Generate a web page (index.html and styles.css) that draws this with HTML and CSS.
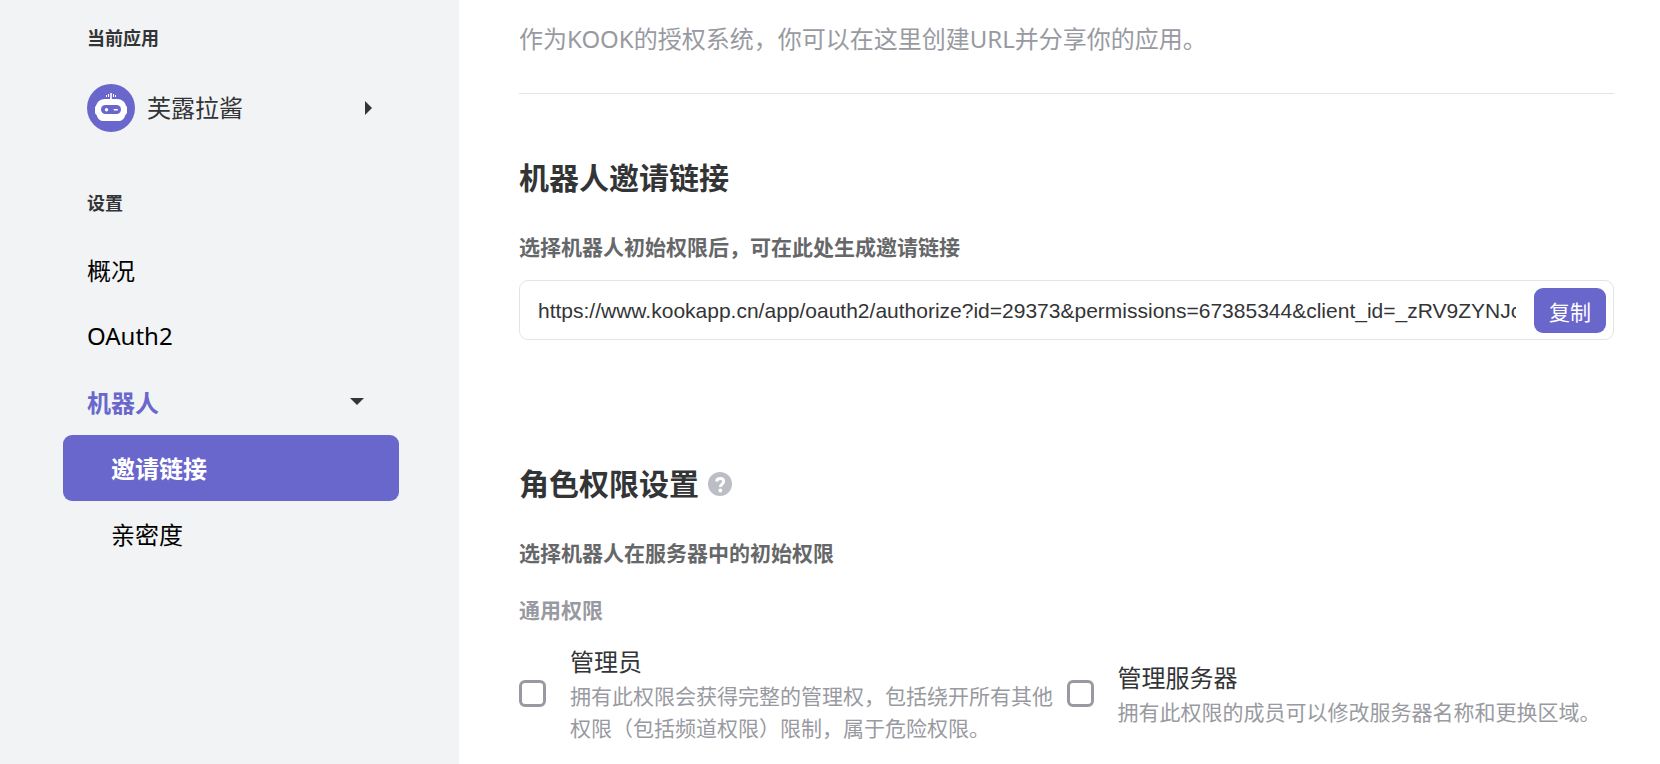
FILE: index.html
```html
<!DOCTYPE html>
<html lang="zh-CN">
<head>
<meta charset="utf-8">
<meta name="viewport" content="width=device-width, initial-scale=1">
<title>机器人邀请链接</title>
<link rel="stylesheet" href="styles.css">
</head>
<body>
<div class="layout">
  <aside class="sidebar">
    <h2 class="side-label">当前应用</h2>
    <button type="button" class="app-switch">
      <svg class="avatar" viewBox="0 0 48 48" aria-hidden="true">
        <circle cx="24" cy="24" r="24" fill="#6966cc"/>
        <g fill="#fff">
          <rect x="23.200" y="9" width="1.600" height="7"/>
          <rect x="21" y="10" width="1" height="3"/>
          <rect x="26" y="10" width="1" height="3"/>
          <rect x="19" y="11" width="1" height="2"/>
          <rect x="28" y="11" width="1" height="2"/>
          <path d="M18 15h12c5 0 8 3 9 7 1 0 1 1 1 2v4c0 1.500-.7 2.500-1.700 3-1 4-3.300 6-7.300 6H17c-4 0-6.300-2-7.300-6-1-.5-1.700-1.500-1.700-3v-4c0-1 0-2 1-2 1-4 4-7 9-7z"/>
        </g>
        <rect x="14" y="21" width="20" height="9" rx="4.500" fill="#6966cc"/>
        <circle cx="19.500" cy="25.700" r="1.700" fill="#fff"/>
        <rect x="26.500" y="25" width="4.500" height="1.600" rx=".8" fill="#fff"/>
      </svg>
      <span class="app-name">芙露拉酱</span>
      <svg class="caret-right" viewBox="0 0 7 14" aria-hidden="true"><path d="M0 0l7 7-7 7z" fill="#333436"/></svg>
    </button>
    <h2 class="side-label">设置</h2>
    <nav class="nav">
      <a class="nav-item" href="#overview">概况</a>
      <a class="nav-item" href="#oauth2">OAuth2</a>
      <a class="nav-item nav-parent" href="#bot">机器人
        <svg class="caret-down" viewBox="0 0 14 7" aria-hidden="true"><path d="M0 0h14L7 7z" fill="#333436"/></svg>
      </a>
      <a class="nav-item nav-child nav-active" href="#invite" aria-current="page">邀请链接</a>
      <a class="nav-item nav-child" href="#intimacy">亲密度</a>
    </nav>
  </aside>
  <main class="main">
    <p class="intro">作为KOOK的授权系统，你可以在这里创建URL并分享你的应用。</p>
    <section class="section">
      <h1 class="title">机器人邀请链接</h1>
      <label class="subtitle" for="invite-url">选择机器人初始权限后，可在此处生成邀请链接</label>
      <div class="url-box">
        <input class="url-input" id="invite-url" type="text" readonly value="https://www.kookapp.cn/app/oauth2/authorize?id=29373&amp;permissions=67385344&amp;client_id=_zRV9ZYNJcQ&amp;redirect_uri=&amp;scope=bot">
        <button type="button" class="copy">复制</button>
      </div>
    </section>
    <section class="section permissions">
      <h1 class="title">角色权限设置
        <svg class="help" viewBox="0 0 24 24" aria-hidden="true">
          <circle cx="12" cy="12" r="12" fill="#bbbec4"/>
          <path d="M8.600 9.500C8.800 7.500 10.200 6.500 12.200 6.500c2.100 0 3.400 1.100 3.400 2.900 0 2.700-3.200 2.700-3.200 5.600" fill="none" stroke="#fff" stroke-width="3"/>
          <circle cx="12.300" cy="18.500" r="1.900" fill="#fff"/>
        </svg>
      </h1>
      <p class="subtitle">选择机器人在服务器中的初始权限</p>
      <h2 class="group">通用权限</h2>
      <div class="perm-grid">
        <label class="perm">
          <input class="check" type="checkbox">
          <span class="perm-text"><span class="perm-name">管理员</span><span class="perm-desc">拥有此权限会获得完整的管理权，包括绕开所有其他权限（包括频道权限）限制，属于危险权限。</span></span>
        </label>
        <label class="perm">
          <input class="check" type="checkbox">
          <span class="perm-text"><span class="perm-name">管理服务器</span><span class="perm-desc">拥有此权限的成员可以修改服务器名称和更换区域。</span></span>
        </label>
      </div>
    </section>
  </main>
</div>
</body>
</html>
```
FILE: styles.css
```css
* {
  box-sizing: border-box;
}

body {
  margin: 0;
  background: #fff;
  color: #333436;
  font-family: "Noto Sans", "Noto Sans CJK SC", sans-serif;
  font-size: 24px;
}

h1, h2, p {
  margin: 0;
}

button, input {
  font: inherit;
  color: inherit;
}

.layout {
  display: flex;
  min-height: 100vh;
}

.sidebar {
  flex: 0 0 459px;
  padding: 24px 60px 24px 63px;
  background: #f1f3f5;
}

.side-label {
  padding-left: 24px;
  font-size: 18px;
  line-height: 28px;
}

.app-switch {
  display: flex;
  align-items: center;
  gap: 12px;
  width: 100%;
  margin: 32px 0 57px;
  padding: 0 27px 0 24px;
  border: 0;
  background: none;
  text-align: left;
  line-height: 36px;
}

.avatar {
  flex: none;
  width: 48px;
  height: 48px;
}

.app-name {
  flex: 1;
}

.caret-right {
  width: 7px;
  height: 14px;
}

.nav {
  margin-top: 20px;
}

.nav-item {
  display: flex;
  align-items: center;
  justify-content: space-between;
  height: 66px;
  padding: 0 35px 2px 24px;
  border-radius: 9px;
  color: #000;
  text-decoration: none;
}

.nav-parent {
  color: #6966cc;
  font-weight: 700;
}

.caret-down {
  width: 14px;
  height: 7px;
}

.nav-child {
  padding-left: 48px;
}

.nav-active {
  background: #6966cc;
  color: #fff;
  font-weight: 700;
}

.main {
  flex: 1;
  min-width: 0;
  padding: 21px 46px 18px 60px;
}

.intro {
  padding-bottom: 36px;
  border-bottom: 1px solid #e3e4e6;
  color: #999aa1;
  line-height: 36px;
}

.section {
  padding-top: 61px;
}

.permissions {
  padding-top: 121px;
}

.title {
  display: flex;
  align-items: center;
  gap: 9px;
  font-size: 30px;
  line-height: 45px;
}

.help {
  width: 24px;
  height: 24px;
}

.subtitle {
  display: block;
  margin-top: 31px;
  color: #666769;
  font-size: 21px;
  font-weight: 700;
  line-height: 32px;
}

.url-box {
  display: flex;
  align-items: center;
  gap: 18px;
  height: 60px;
  margin-top: 17px;
  padding: 1px 7px 0 18px;
  border: 1px solid #e3e4e6;
  border-radius: 9px;
}

.url-input {
  flex: 1;
  min-width: 0;
  padding: 0;
  border: 0;
  outline: 0;
  background: none;
  font-family: "Liberation Sans", sans-serif;
  font-size: 21px;
}

.copy {
  width: 72px;
  height: 45px;
  padding: 0;
  border: 0;
  border-radius: 9px;
  background: #6966cc;
  color: #fff;
  font-size: 21px;
}

.group {
  margin-top: 25px;
  color: #999aa1;
  font-size: 21px;
  line-height: 32px;
}

.perm-grid {
  display: grid;
  grid-template-columns: 1fr 1fr;
  margin-top: 16px;
}

.perm {
  display: flex;
  align-items: center;
  gap: 24px;
}

.check {
  appearance: none;
  flex: none;
  width: 27px;
  height: 27px;
  margin: 0;
  border: 3px solid #999aa1;
  border-radius: 6px;
}

.check:checked {
  border-color: #6966cc;
  background: #6966cc;
}

.perm-text {
  padding-top: 2px;
}

.perm-name, .perm-desc {
  display: block;
}

.perm-name {
  line-height: 36px;
}

.perm-desc {
  color: #999aa1;
  font-size: 21px;
  line-height: 32px;
}
```
